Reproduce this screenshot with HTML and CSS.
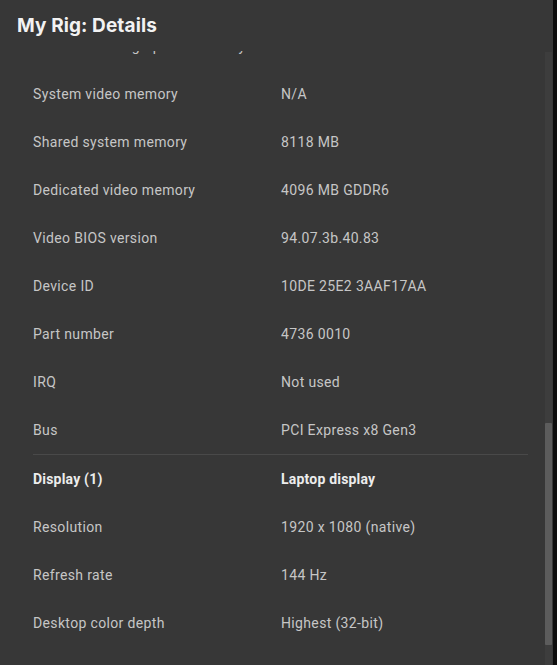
FILE: index.html
```html
<!DOCTYPE html>
<html>
<head>
<meta charset="utf-8">
<link rel="stylesheet" href="styles.css">
</head>
<body>
<div class="window">
  <div class="panel">
    <header class="header"><h1 class="title">My Rig: Details</h1></header>
    <div class="body">
      <div class="viewport">
        <div class="list">
          <div class="row"><span class="label">Total available graphics memory</span><span class="value">12214 MB</span></div>
          <div class="row"><span class="label">System video memory</span><span class="value">N/A</span></div>
          <div class="row"><span class="label">Shared system memory</span><span class="value">8118 MB</span></div>
          <div class="row"><span class="label">Dedicated video memory</span><span class="value">4096 MB GDDR6</span></div>
          <div class="row"><span class="label">Video BIOS version</span><span class="value">94.07.3b.40.83</span></div>
          <div class="row"><span class="label">Device ID</span><span class="value">10DE 25E2 3AAF17AA</span></div>
          <div class="row"><span class="label">Part number</span><span class="value">4736 0010</span></div>
          <div class="row"><span class="label">IRQ</span><span class="value">Not used</span></div>
          <div class="row"><span class="label">Bus</span><span class="value">PCI Express x8 Gen3</span></div>
          <div class="divider"></div>
          <div class="row head"><span class="label">Display (1)</span><span class="value">Laptop display</span></div>
          <div class="row"><span class="label">Resolution</span><span class="value">1920 x 1080 (native)</span></div>
          <div class="row"><span class="label">Refresh rate</span><span class="value">144 Hz</span></div>
          <div class="row"><span class="label">Desktop color depth</span><span class="value">Highest (32-bit)</span></div>
        </div>
      </div>
      <div class="track"><div class="thumb"></div></div>
    </div>
  </div>
  <div class="edge"></div>
</div>
</body>
</html>
```
FILE: styles.css
```css
html, body {
  margin: 0;
  padding: 0;
  background: #373737;
  overflow: hidden;
}
.window {
  display: flex;
  width: 557px;
  height: 665px;
}
.panel {
  flex: 1;
  display: flex;
  flex-direction: column;
  background: #373737;
  min-width: 0;
}
.edge {
  width: 4px;
  background: #0c0c0c;
}
.header {
  height: 51px;
  flex: none;
  padding: 0 0 1px 17px;
  display: flex;
  align-items: center;
  box-sizing: border-box;
  background: #373737;
}
.title {
  margin: 0;
  font-family: "Inter", "Liberation Sans", sans-serif;
  font-weight: 700;
  font-size: 19px;
  color: #f2f2f2;
  letter-spacing: 0.1px;
}
.body {
  flex: 1;
  display: flex;
  min-height: 0;
}
.viewport {
  flex: 1;
  overflow: hidden;
  min-width: 0;
}
.list {
  margin-top: -29px;
  padding: 0 17px 0 33px;
}
.row {
  display: grid;
  grid-template-columns: 248px 1fr;
  height: 48px;
  align-items: center;
  font-family: "Roboto", "Liberation Sans", sans-serif;
  font-size: 14px;
  letter-spacing: 0.35px;
  color: #c6c6c6;
}
.row.head {
  font-weight: 700;
  color: #ececec;
  letter-spacing: 0.2px;
}
.divider {
  height: 1px;
  background: #494949;
}
.track {
  width: 7px;
  margin: 1px 1px 0 0;
  background: #3d3d3d;
  display: flex;
  flex-direction: column;
}
.thumb {
  margin-top: 371px;
  height: 222px;
  background: #5c5c5c;
  border-radius: 1px;
}
```
